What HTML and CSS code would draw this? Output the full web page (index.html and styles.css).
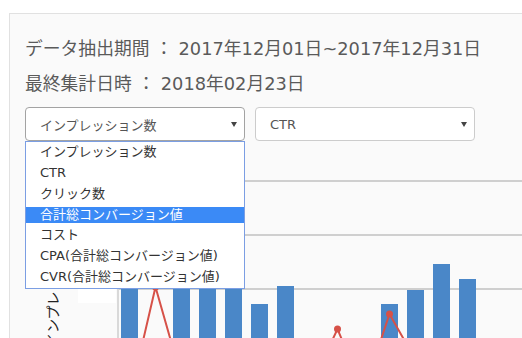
FILE: index.html
```html
<!DOCTYPE html>
<html lang="ja">
<head>
  <meta charset="UTF-8">
  <title>レポート</title>
  <link rel="stylesheet" href="styles.css">
</head>
<body>

  <div class="panel">
    <div class="info">
      <p>データ抽出期間 ： 2017年12月01日~2017年12月31日</p>
      <p>最終集計日時 ： 2018年02月23日</p>
    </div>

    <div class="controls">
      <div class="select-wrap">
        <div class="select is-open">インプレッション数<span class="arrow"></span></div>
        <ul class="options">
          <li>インプレッション数</li>
          <li>CTR</li>
          <li>クリック数</li>
          <li class="active">合計総コンバージョン値</li>
          <li>コスト</li>
          <li>CPA(合計総コンバージョン値)</li>
          <li>CVR(合計総コンバージョン値)</li>
        </ul>
      </div>
      <div class="select-wrap">
        <div class="select">CTR<span class="arrow"></span></div>
      </div>
    </div>

    <div class="chart">
      <svg width="560" height="170" viewBox="0 0 560 170">
        <rect x="68" y="11" width="38" height="122" fill="#fff"/>
        <!-- grid -->
        <rect x="107" y="10" width="460" height="2" fill="#cfcfcf"/>
        <rect x="107" y="64" width="460" height="2" fill="#cfcfcf"/>
        <rect x="107" y="118" width="460" height="2" fill="#cfcfcf"/>
        <rect x="107" y="10" width="2" height="160" fill="#d9d9d9"/>
        <!-- bars -->
        <g fill="#4a87c8">
          <rect x="111" y="80" width="17" height="90"/>
          <rect x="163" y="92" width="17" height="78"/>
          <rect x="189" y="75" width="17" height="95"/>
          <rect x="215" y="100" width="17" height="70"/>
          <rect x="241" y="134" width="17" height="36"/>
          <rect x="267" y="116" width="17" height="54"/>
          <rect x="371" y="134" width="17" height="36"/>
          <rect x="397" y="120" width="17" height="50"/>
          <rect x="423" y="94" width="17" height="76"/>
          <rect x="449" y="109" width="17" height="61"/>
        </g>
        <!-- ctr line -->
        <polyline fill="none" stroke="#d65148" stroke-width="2"
          points="119.5,229 145.5,117 171.5,208 197.5,230 223.5,230 249.5,230 275.5,230 301.5,215 327.5,159 353.5,222 379.5,144 405.5,190 431.5,230 457.5,230 483.5,230 509.5,230"/>
        <g fill="#d65148">
          <circle cx="145.5" cy="117" r="3.5"/>
          <circle cx="327.5" cy="159" r="3.5"/>
          <circle cx="379.5" cy="144" r="3.5"/>
        </g>
        <text class="axis-title" transform="translate(48,177) rotate(-90)">インプレッション数</text>
      </svg>
    </div>
  </div>

</body>
</html>
```

FILE: styles.css
```css
* {
  box-sizing: border-box;
}
html, body {
  height: 100%;
}
body {
  margin: 0;
  background: #fff;
  font-family: 'DejaVu Sans', 'Noto Sans CJK JP', sans-serif;
  color: #555;
  overflow: hidden;
}

.panel {
  margin: 13px 0 0 9px;
  width: 600px;
  border: 1px solid #e1e1e1;
  background: #fafafa;
  padding: 17px 0 0 15px;
}

.info p {
  margin: 0;
  font-size: 17.8px;
  line-height: 35px;
  color: #5a5a5a;
}

.controls {
  display: flex;
  gap: 10px;
  margin-top: 6px;
}
.select-wrap {
  position: relative;
}
.select {
  width: 220px;
  height: 34px;
  border: 1px solid #ccc;
  border-radius: 4px;
  background: #fff;
  padding: 0 7px 0 14px;
  font-size: 13px;
  display: flex;
  align-items: center;
  justify-content: space-between;
}
.select.is-open {
  border-color: #a3a3a3;
}
.arrow {
  width: 0;
  height: 0;
  border-left: 3px solid transparent;
  border-right: 3px solid transparent;
  border-top: 5px solid #444;
}

.options {
  position: absolute;
  top: 100%;
  left: 0;
  z-index: 2;
  width: 220px;
  margin: 0;
  padding: 0;
  list-style: none;
  background: #fff;
  border: 1px solid #7b9ee3;
  font-size: 13px;
  color: #333;
}
.options li {
  height: 20.85px;
  line-height: 16.85px;
  padding-left: 14px;
  border-top: 2px solid transparent;
  border-bottom: 2px solid transparent;
  background-clip: padding-box;
  white-space: nowrap;
}
.options li.active {
  background-color: #3b8af6;
  color: #fff;
}

.chart {
  margin: 29px 0 0 -15px;
}
.chart svg {
  display: block;
}
.axis-title {
  font-family: 'Noto Sans CJK JP', sans-serif;
  font-size: 14px;
  fill: #222;
}
```
